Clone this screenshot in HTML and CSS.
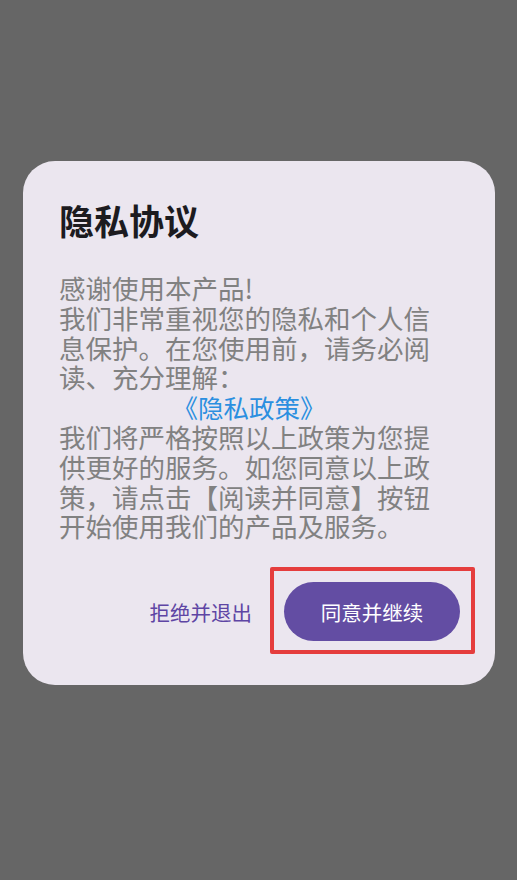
FILE: index.html
```html
<!DOCTYPE html>
<html lang="zh-CN">
<head>
<meta charset="utf-8">
<title>隐私协议</title>
<link rel="stylesheet" href="styles.css">
</head>
<body>
<div class="dialog">
  <h1 class="title">隐私协议</h1>
  <div class="content">
    <p class="text">感谢使用本产品!<br>我们非常重视您的隐私和个人信息保护。在您使用前，请务必阅读、充分理解：</p>
    <p class="policy">《隐私政策》</p>
    <p class="text">我们将严格按照以上政策为您提供更好的服务。如您同意以上政策，请点击【阅读并同意】按钮开始使用我们的产品及服务。</p>
  </div>
  <div class="actions">
    <span class="btn-text">拒绝并退出</span>
    <span class="highlight"><span class="btn-filled">同意并继续</span></span>
  </div>
</div>
</body>
</html>
```
FILE: styles.css
```css
html, body {
  margin: 0;
  padding: 0;
  background: #666666;
  height: 100%;
}
body {
  font-family: "Noto Sans CJK SC", "Noto Sans", sans-serif;
  padding-top: 161px;
  box-sizing: border-box;
}
.dialog {
  margin-left: 23px;
  width: 472px;
  height: 524px;
  box-sizing: border-box;
  background: #ebe6ef;
  border-radius: 32px;
  padding: 37px 20px 0 36px;
}
.title {
  margin: 0;
  font-size: 35px;
  line-height: 44px;
  font-weight: 700;
  color: #1c1b1f;
}
.content {
  margin-top: 31px;
  width: 386px;
}
.text, .policy {
  margin: 0;
  font-size: 26.5px;
  line-height: 29.8px;
  color: #818181;
}
.policy {
  text-align: center;
  color: #2b8fe0;
  font-size: 25.5px;
  padding-right: 6px;
}
.actions {
  margin-top: 26px;
  display: flex;
  justify-content: flex-end;
  align-items: center;
  gap: 18px;
}
.btn-text {
  font-size: 20.5px;
  color: #5e45a4;
  padding-top: 2px;
}
.highlight {
  display: flex;
  border: 4px solid #e53d3d;
  border-radius: 2px;
  padding: 11px 11px 9px 10px;
}
.btn-filled {
  display: flex;
  align-items: center;
  justify-content: center;
  width: 176px;
  height: 59px;
  border-radius: 30px;
  background: #634da3;
  color: #ffffff;
  font-size: 20.5px;
}
```
